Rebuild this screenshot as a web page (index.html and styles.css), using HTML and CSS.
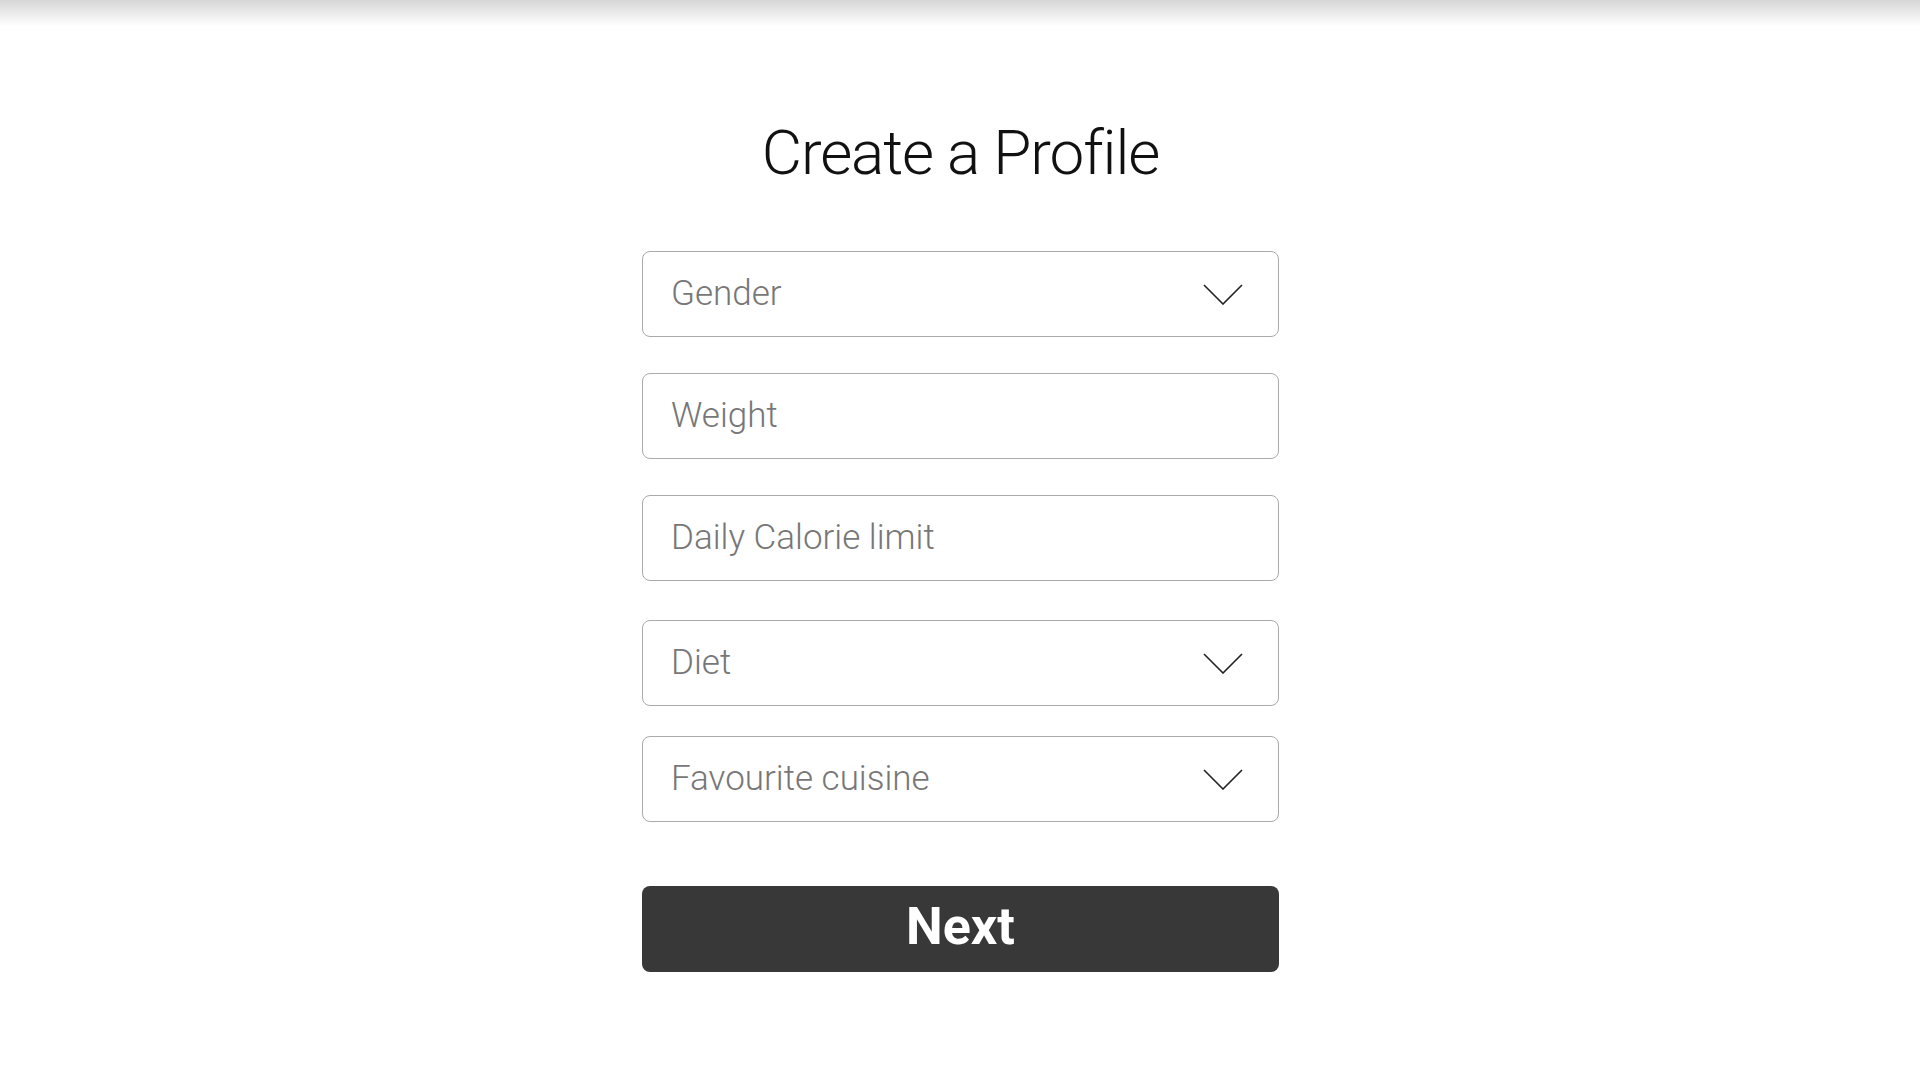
FILE: index.html
```html
<!DOCTYPE html>
<html lang="en">
<head>
    <meta charset="UTF-8">
    <meta name="viewport" content="width=device-width, initial-scale=1.0">
    <title>Create a Profile</title>
    <link rel="stylesheet" href="styles.css">
</head>
<body>
    <div class="top-shade"></div>
    <div id="container">
        <h1>Create a Profile</h1>
        <form id="profileForm">
            <div class="field select">
                <span>Gender</span>
                <svg class="chevron" viewBox="0 0 40 21"><path d="M1 1 L20 20 L39 1"/></svg>
            </div>
            <div class="field">
                <span>Weight</span>
            </div>
            <div class="field">
                <span>Daily Calorie limit</span>
            </div>
            <div class="field select diet">
                <span>Diet</span>
                <svg class="chevron" viewBox="0 0 40 21"><path d="M1 1 L20 20 L39 1"/></svg>
            </div>
            <div class="field select cuisine">
                <span>Favourite cuisine</span>
                <svg class="chevron" viewBox="0 0 40 21"><path d="M1 1 L20 20 L39 1"/></svg>
            </div>
            <button type="button" class="next">Next</button>
        </form>
    </div>
</body>
</html>
```

FILE: styles.css
```css
body {
    margin: 0;
    background-color: #fff;
    font-family: Roboto, "Liberation Sans", sans-serif;
}

/* soft shadow along the top edge */
.top-shade {
    height: 26px;
    background: linear-gradient(#d6d6d6, #ffffff);
}

#container {
    width: 637px;
    margin: 0 auto;
    padding-left: 1px;
}

h1 {
    margin: 96px 0 0;
    height: 129px;
    text-align: center;
    font-size: 62px;
    font-weight: 300;
    letter-spacing: -1.1px;
    color: #111;
    line-height: 1;
}

#profileForm {
    display: flex;
    flex-direction: column;
}

.field {
    box-sizing: border-box;
    height: 86px;
    border: 1.5px solid #aaa;
    border-radius: 8px;
    display: flex;
    align-items: center;
    justify-content: space-between;
    padding: 0 35px 0 28px;
    margin-bottom: 36px;
    font-size: 35px;
    font-weight: 300;
    color: #777;
}

.field span {
    margin-top: -2px;
}

.diet {
    margin-bottom: 30px;
    margin-top: 3px;
}

.cuisine {
    margin-bottom: 64px;
}

.chevron {
    width: 40px;
    height: 21px;
    fill: none;
    stroke: #222;
    stroke-width: 1.6;
}

.next {
    height: 86px;
    padding: 0 0 5px;
    border: none;
    border-radius: 8px;
    background-color: #383838;
    color: #fff;
    font-family: Roboto, "Liberation Sans", sans-serif;
    font-size: 52px;
    font-weight: 700;
    cursor: pointer;
}
```
